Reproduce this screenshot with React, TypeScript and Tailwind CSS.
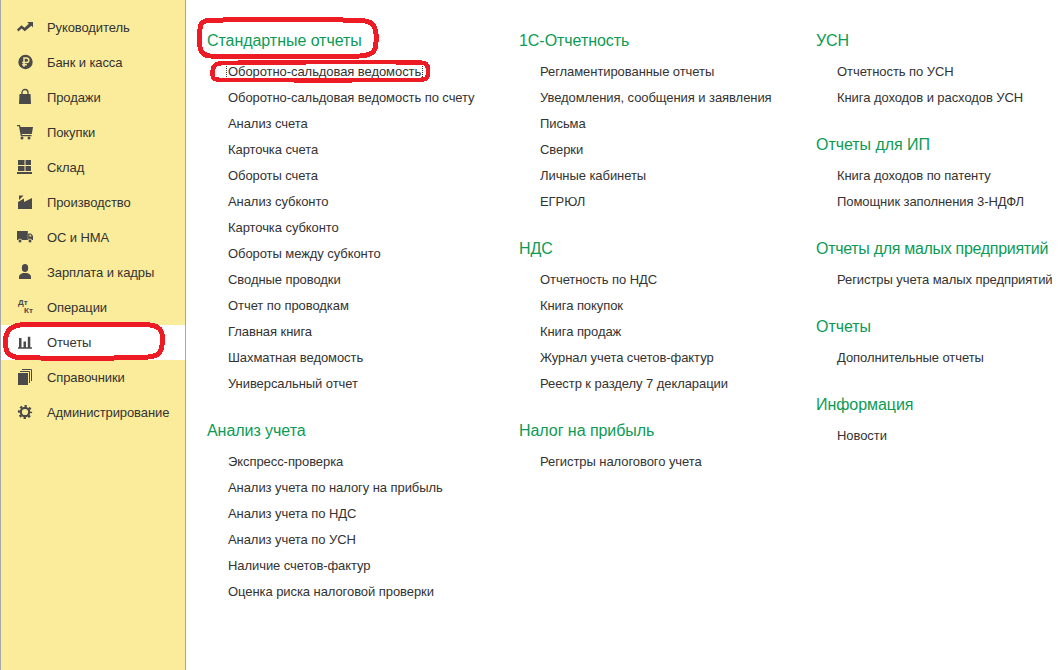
import type { ReactNode } from 'react';

const ICON = 'w-[16px] h-[17px] fill-[#4a4a4a] overflow-visible';
const MENU_BG = '#fbec9b';

const icons: Record<string, ReactNode> = {
  chief: (
    <svg viewBox="0 0 16 17" className={ICON}>
      <path d="M0 10.500 4.500 6.200l3 2.500L11.800 4.800 10.300 3H16v5.500l-1.600-1.700-6.600 5.400-3.200-2.600-3.300 2.900z" />
    </svg>
  ),
  bank: (
    <svg viewBox="0 0 16 17" className={ICON}>
      <circle cx="8.500" cy="8" r="7.200" />
      <path d="M7 12.800V4h2.500a2.300 2.300 0 0 1 0 4.600H5.200M5.200 10.700h4.600" fill="none" stroke={MENU_BG} strokeWidth="1.500" />
    </svg>
  ),
  sales: (
    <svg viewBox="0 0 16 17" className={ICON}>
      <path d="M2.500 5h11l.5 10H2z" />
      <path d="M5 7V3.500a3 3 0 0 1 6 0V7" fill="none" stroke="#4a4a4a" strokeWidth="1.300" />
    </svg>
  ),
  buy: (
    <svg viewBox="0 0 16 17" className={ICON}>
      <path d="M0 1h3l.5 2H16l-1.200 7H4.800l.2 1h9.500v1.300H3.800L2 2.300H0z" />
      <circle cx="5" cy="14" r="1.500" />
      <circle cx="12" cy="14" r="1.500" />
    </svg>
  ),
  stock: (
    <svg viewBox="0 0 16 17" className={ICON}>
      <path d="M1 1h6.500v5H1zM8.500 1H14v5H8.500zM1 7h6.500v5H1zM8.500 7H14v5H8.500zM0 13h15v2H0z" />
    </svg>
  ),
  factory: (
    <svg viewBox="0 0 16 17" className={ICON}>
      <path d="M2 1.500h4.500L2 6zM1 15V8l6-3.500V8l8-4v11z" />
    </svg>
  ),
  truck: (
    <svg viewBox="0 0 16 17" className={ICON}>
      <path fillRule="evenodd" d="M0 2h10.800v9H0zM11.200 4.500H14l2 2.500v4h-4.800zM12.500 5.500V7.500h2.200L13.400 5.500z" />
      <circle cx="3" cy="12" r="1.900" stroke={MENU_BG} strokeWidth=".8" />
      <circle cx="13" cy="12" r="1.900" stroke={MENU_BG} strokeWidth=".8" />
    </svg>
  ),
  person: (
    <svg viewBox="0 0 16 17" className={ICON}>
      <ellipse cx="8" cy="4" rx="3.200" ry="4" />
      <path d="M2 15v-2.500c0-2 2.500-3 4-3.500h4c1.500.5 4 1.500 4 3.500V15z" />
    </svg>
  ),
  bars: (
    <svg viewBox="0 0 16 17" className={ICON}>
      <path d="M2 4h2.500v9.300H2zM6.500 7.600H9v5.700H6.500zM10.800 2.700h2.500v10.600h-2.500zM1 13.300h14v1.400H1z" />
    </svg>
  ),
  books: (
    <svg viewBox="0 0 16 17" className={ICON}>
      <path d="M1 4h10v12H1z" />
      <path d="M3 2.500h9.500V14M5 .5h9.500V12" fill="none" stroke="#4a4a4a" />
    </svg>
  ),
  gear: (
    <svg viewBox="0 0 16 17" className={ICON}>
      <circle cx="8" cy="8" r="4.200" fill="none" stroke="#4a4a4a" strokeWidth="2.200" />
      <circle cx="8" cy="8" r="6" fill="none" stroke="#4a4a4a" strokeWidth="2.200" strokeDasharray="2.360 2.352" strokeDashoffset="1.180" />
    </svg>
  ),
};

const menu = [
  { label: 'Руководитель', icon: 'chief' },
  { label: 'Банк и касса', icon: 'bank' },
  { label: 'Продажи', icon: 'sales' },
  { label: 'Покупки', icon: 'buy' },
  { label: 'Склад', icon: 'stock' },
  { label: 'Производство', icon: 'factory' },
  { label: 'ОС и НМА', icon: 'truck' },
  { label: 'Зарплата и кадры', icon: 'person' },
  { label: 'Операции', icon: 'dtkt' },
  { label: 'Отчеты', icon: 'bars', active: true },
  { label: 'Справочники', icon: 'books' },
  { label: 'Администрирование', icon: 'gear' },
];

const columns = [
  {
    width: 'w-[312px]',
    sections: [
      {
        title: 'Стандартные отчеты',
        items: [
          'Оборотно-сальдовая ведомость',
          'Оборотно-сальдовая ведомость по счету',
          'Анализ счета',
          'Карточка счета',
          'Обороты счета',
          'Анализ субконто',
          'Карточка субконто',
          'Обороты между субконто',
          'Сводные проводки',
          'Отчет по проводкам',
          'Главная книга',
          'Шахматная ведомость',
          'Универсальный отчет',
        ],
      },
      {
        title: 'Анализ учета',
        items: [
          'Экспресс-проверка',
          'Анализ учета по налогу на прибыль',
          'Анализ учета по НДС',
          'Анализ учета по УСН',
          'Наличие счетов-фактур',
          'Оценка риска налоговой проверки',
        ],
      },
    ],
  },
  {
    width: 'w-[297px]',
    sections: [
      {
        title: '1С-Отчетность',
        items: ['Регламентированные отчеты', 'Уведомления, сообщения и заявления', 'Письма', 'Сверки', 'Личные кабинеты', 'ЕГРЮЛ'],
      },
      {
        title: 'НДС',
        items: ['Отчетность по НДС', 'Книга покупок', 'Книга продаж', 'Журнал учета счетов-фактур', 'Реестр к разделу 7 декларации'],
      },
      { title: 'Налог на прибыль', items: ['Регистры налогового учета'] },
    ],
  },
  {
    width: 'w-[240px]',
    sections: [
      { title: 'УСН', items: ['Отчетность по УСН', 'Книга доходов и расходов УСН'] },
      { title: 'Отчеты для ИП', items: ['Книга доходов по патенту', 'Помощник заполнения 3-НДФЛ'] },
      { title: 'Отчеты для малых предприятий', items: ['Регистры учета малых предприятий'] },
      { title: 'Отчеты', items: ['Дополнительные отчеты'] },
      { title: 'Информация', items: ['Новости'] },
    ],
  },
];

const FOCUSED = 'Оборотно-сальдовая ведомость';

function MenuRow({ label, icon, active }: { label: string; icon: string; active?: boolean }) {
  return (
    <div className={`flex items-center h-[35px] pl-[16px] ${active ? 'bg-white' : ''}`}>
      <span className="w-[30px] shrink-0 flex items-center">
        {icon === 'dtkt' ? (
          <span className="block w-[16px] h-[17px] font-bold text-[8px] leading-[8px] text-[#4a4a4a]">
            <span className="block pl-[1px]">Дт</span>
            <span className="block pl-[7px]">Кт</span>
          </span>
        ) : (
          icons[icon]
        )}
      </span>
      <span className="text-[13px] tracking-[-0.1px] text-[#333] whitespace-nowrap">{label}</span>
    </div>
  );
}

export default function App() {
  return (
    <div className="relative flex w-[1062px] h-[670px] overflow-hidden bg-white font-['Liberation_Sans',Arial,sans-serif]">
      <aside className="w-[186px] h-full shrink-0 pt-[10px] bg-[#fbec9b] border-l border-r border-[#a6a6a6]">
        {menu.map(m => (
          <MenuRow key={m.label} {...m} />
        ))}
      </aside>

      <main className="flex pl-[21px] pt-[30px]">
        {columns.map((col, i) => (
          <div key={i} className={`${col.width} shrink-0 flex flex-col gap-[23px]`}>
            {col.sections.map(s => (
              <section key={s.title}>
                <h2 className={`h-[22px] mb-[7px] text-[16px] leading-[22px] font-normal text-[#0c9b55] whitespace-nowrap ${s.title.length > 25 ? 'tracking-[-0.3px]' : 'tracking-[-0.05px]'}`}>
                  {s.title}
                </h2>
                {s.items.map(item => (
                  <div key={item} className="h-[26px] pl-[21px] text-[13px] leading-[26px] tracking-[-0.07px] text-[#333] whitespace-nowrap">
                    {item === FOCUSED ? (
                      <span className="inline-block -ml-[1px] px-[1px] leading-[17px] outline outline-1 outline-dotted outline-[#333]">{item}</span>
                    ) : (
                      item
                    )}
                  </div>
                ))}
              </section>
            ))}
          </div>
        ))}
      </main>

      {/* красные обводки поверх скриншота */}
      <svg className="absolute left-0 top-0 pointer-events-none" width="1062" height="670" fill="none" stroke="#ed1c24" shapeRendering="crispEdges">
        <path strokeWidth="5" d="M205 20.500C250 19 340 19 365 21C375 22 377 30 376 42C376 52 372 55 360 56C320 57 240 57 210 56C200 55 199 48 199.500 35C200 24 200 21 210 20.500Z" />
        <path strokeWidth="4.500" d="M222 63C280 62 390 62 420 62.500C428 63 428 66 428 72C428 79 426 79.500 418 80C370 80.500 260 80.500 222 80C213 79.500 212 78 212.500 72C213 66 215 63.500 222 63Z" />
        <path strokeWidth="5" d="M25 324.500C70 324 130 323.500 150 325C160 326 163 331 162.500 340C162 352 160 356 148 357C110 358.500 50 358.500 20 357.500C8 357 5 352 5.500 340C6 330 12 325 25 324.500Z" />
      </svg>
    </div>
  );
}
